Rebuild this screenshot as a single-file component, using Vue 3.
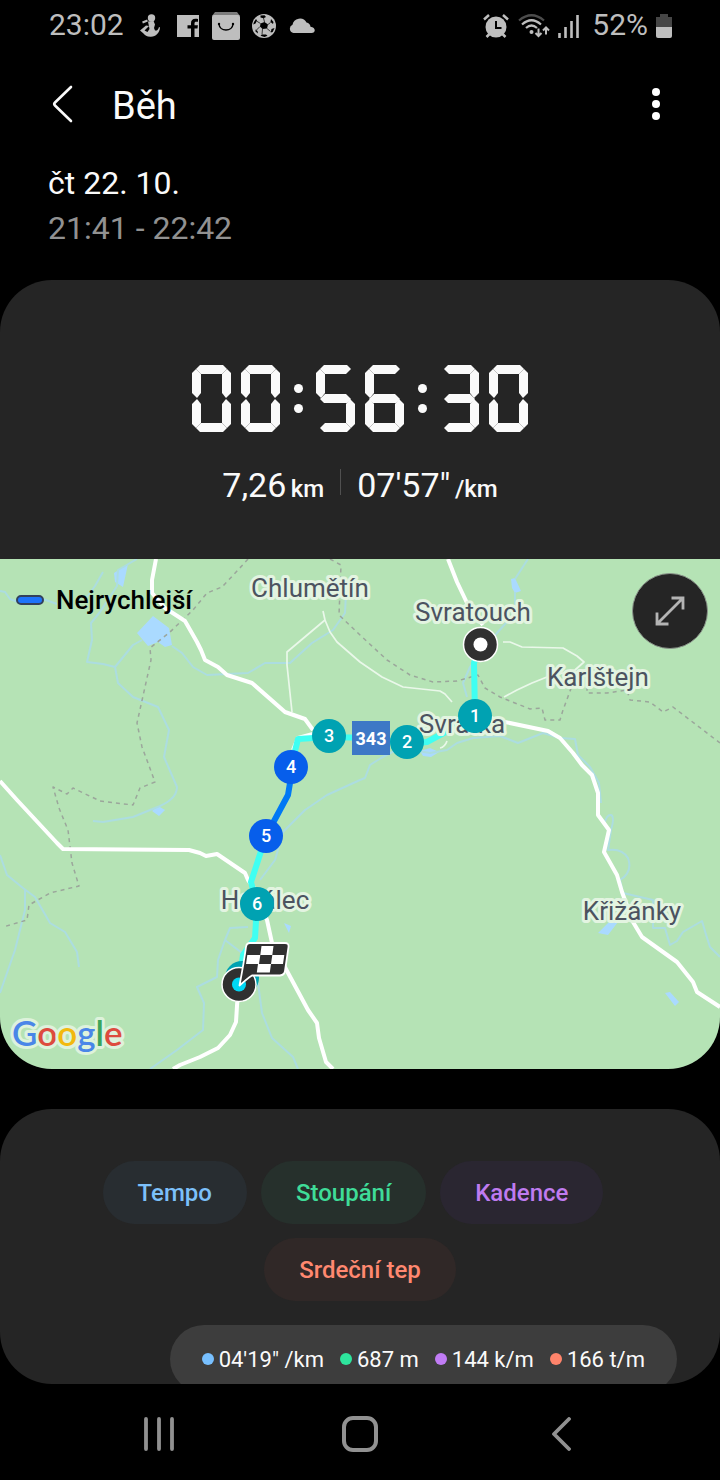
<script setup>
const segmentsByDigit = {
  0: 'abcdef', 1: 'bc', 2: 'abged', 3: 'abgcd', 4: 'fgbc',
  5: 'afgcd', 6: 'afgedc', 7: 'abc', 8: 'abcdefg', 9: 'abcdfg'
}
const duration = '00:56:30'

const chipRows = [
  [
    { label: 'Tempo', tone: 'pace' },
    { label: 'Stoupání', tone: 'climb' },
    { label: 'Kadence', tone: 'cadence' }
  ],
  [{ label: 'Srdeční tep', tone: 'heart' }]
]

const readings = [
  { text: '04\'19" /km', tone: 'pace' },
  { text: '687 m', tone: 'climb' },
  { text: '144 k/m', tone: 'cadence' },
  { text: '166 t/m', tone: 'heart' }
]

const towns = [
  { name: 'Chlumětín', x: 310, y: 597 },
  { name: 'Svratouch', x: 473, y: 621 },
  { name: 'Karlštejn', x: 598, y: 686 },
  { name: 'Svratka', x: 462, y: 733 },
  { name: 'Herálec', x: 265, y: 909 },
  { name: 'Křižánky', x: 632, y: 920 }
]

const kilometres = [
  { n: 1, x: 475, y: 716 },
  { n: 2, x: 407, y: 742 },
  { n: 3, x: 329, y: 736 },
  { n: 4, x: 291, y: 767, fast: true },
  { n: 5, x: 266, y: 836, fast: true },
  { n: 6, x: 257, y: 904 }
]
</script>

<template>
  <div class="screen">
    <div class="status">
      <div class="status-side">
        <span class="clock">23:02</span>
        <svg class="i-fit" width="20" height="24" viewBox="0 0 20 24" aria-hidden="true">
          <circle cx="11.500" cy="4" r="3.700" />
          <path d="M8 7.500 13.500 7l1.500 3.500-1 3.500 1 2.500c2 .500 3-.500 4-3.500l1 .500c-.500 5.500-4 9-9 9.300-4 .200-6-1.300-7.500-3.300L0 16.500 6 11.500l3 .500-4.500 4.500 3 1.500 2-3z" />
          <path d="M2.500 8.500 7.500 6.500" stroke="currentColor" stroke-width="2" />
        </svg>
        <svg class="i-fb" width="22" height="22" viewBox="0 0 22 22" aria-hidden="true">
          <path fill-rule="evenodd" d="M0 0h22v22h-4.500v-8.500h3l.400-3.200h-3.400V8.500c0-1.200.500-1.700 1.700-1.700h1.800V4c-.700-.100-1.500-.200-2.600-.200-3 0-4.400 1.700-4.400 4.400v2.100H10.500v3.200H14V22H0z" />
        </svg>
        <svg class="i-bag" width="28" height="28" viewBox="0 0 28 28" aria-hidden="true">
          <path d="M3 0h22l3 4H0z" opacity=".65" />
          <rect y="3" width="28" height="25" rx="2" />
          <path d="M7 12c.500 8 13.500 8 14 0" fill="none" stroke="#000" stroke-width="1.500" />
          <circle cx="7" cy="12" r="1.200" fill="#000" /><circle cx="21" cy="12" r="1.200" fill="#000" />
        </svg>
        <svg class="i-ball" width="24" height="24" viewBox="0 0 24 24" aria-hidden="true">
          <circle cx="12" cy="12" r="12" />
          <g fill="#000">
            <path d="M8.500 9.500 12.500 8l3.500 2.500-1 4-4.500.500-2.500-2.500z" />
            <path d="M8.500 1.500 12.500 1.200 14 3l-2.500 1.200L8.500 3.500zM19 5l2.500 3-.5 2-2.500-2zM22.500 14l-1.800 4-2 .5.800-3.500zM14 20.500l1.500 1.200-3 1.300-4-1.200 1.500-1.300zM3.500 15.500l2 1.500.500 2.500-2.500-2zM2 8l2-3L5 6.500 3.500 9.500 1.200 10.500z" />
          </g>
          <path d="M11.500 4 12.500 8M16 10.500l2.500-2M15 14.500l3.500 3M10.500 15l-.5 5.500M8 12.500l-3.500 3.500M8.500 9.500 4.500 7" stroke="#000" stroke-width=".7" />
        </svg>
        <svg class="i-cloud" width="26" height="16" viewBox="0 0 26 16" aria-hidden="true">
          <path d="M4.500 15A4.300 4.300 0 0 1 3.500 6.800 7.500 7.500 0 0 1 17.500 4.500a5 5 0 0 1 4 4.200c5.500.500 5.500 6.300 1 6.300z" />
        </svg>
      </div>
      <div class="status-side">
        <svg width="26" height="24" viewBox="0 0 26 24" aria-hidden="true">
          <circle cx="13" cy="13" r="10.500" />
          <path d="M1 5.500 6 1M25 5.500 20 1M6.500 20 3.500 23M19.500 20l3 3" stroke="currentColor" stroke-width="2.500" />
          <path d="M13 7v7h5.500" fill="none" stroke="#000" stroke-width="2" />
        </svg>
        <svg class="i-wifi" width="32" height="24" viewBox="0 0 32 24" aria-hidden="true">
          <g fill="none" stroke="currentColor" stroke-width="2.200">
            <path d="M1 6.500Q13.500-4 26 6.500" opacity=".4" />
            <path d="M4 10.500q9.500-8.500 19 0" />
            <path d="M8 14q5.500-5 11 0" />
            <path d="M20.500 14.500v7.500M17.500 19l3 3 3-3M28 20.500V13.500M25 16.500l3-3 3 3" stroke-width="2" />
          </g>
          <circle cx="13.500" cy="18" r="2" />
        </svg>
        <svg class="i-signal" width="22" height="23" viewBox="0 0 22 23" aria-hidden="true">
          <path d="M1.500 18v5M7.500 12v11M13.500 6v17M19.500 0v23" stroke="currentColor" stroke-width="2.600" />
        </svg>
        <span class="percent">52%</span>
        <svg width="16" height="24" viewBox="0 0 16 24" aria-hidden="true">
          <path d="M4 0h8v3h4v10H0V3h4z" fill="#464646" /><path d="M0 13h16v9q0 2-2 2H2q-2 0-2-2z" />
        </svg>
      </div>
    </div>

    <header class="bar">
      <button class="icon-button back" aria-label="Zpět">
        <svg width="22" height="38" viewBox="0 0 22 38"><path d="M20 2 4 17.500q-1.500 1.500 0 3L20 36" fill="none" stroke="#fafafa" stroke-width="2.600" stroke-linecap="round" /></svg>
      </button>
      <h1>Běh</h1>
      <button class="icon-button more" aria-label="Další možnosti">
        <svg width="8" height="32" viewBox="0 0 8 32" fill="#fff"><circle cx="4" cy="4" r="4" /><circle cx="4" cy="16" r="4" /><circle cx="4" cy="28" r="4" /></svg>
      </button>
    </header>

    <main>
      <div class="when">
        <div>čt 22. 10.</div>
        <div class="hours">21:41 - 22:42</div>
      </div>

      <section class="card summary">
        <div class="timer" role="img" :aria-label="duration">
          <template v-for="(c, i) in duration" :key="i">
            <span v-if="c === ':'" class="colon"><i></i><i></i></span>
            <span v-else class="digit"><i v-for="s in segmentsByDigit[c]" :key="s" :class="['seg', s]"></i></span>
          </template>
        </div>
        <div class="totals">
          <span class="total">7,26 <small>km</small></span>
          <span class="rule"></span>
          <span class="total">07'57" <small>/km</small></span>
        </div>

        <div class="map">
          <svg class="terrain" viewBox="0 559 720 510">
            <g class="water">
              <path d="M137 633 153 616 169 628 172 645 165 647 158 642 148 646zM114 573 128 564 123 587 115 582zM152 811 158 806 165 810 159 816zM511 579 515 578 521 591 515 593 512 588zM598 933 612 919 618 922 608 935zM665 993 670 992 679 1002 675 1006zM284 923 291 926 289 933zM420 751 430 748 439 752 431 757 423 756z" />
            </g>
            <g class="river">
              <path d="M0 591 5 592 10 599 18 602M40 598 57 604" />
              <path d="M103 572 95 586 87 597M137 559 118 570 117 586 100 612 91 623 92 640 87 662 103 664 115 667 118 683 133 697 158 707 169 730 164 757 177 787Q177 800 155 808L133 817 103 822 93 821M115 667 133 645 142 640" />
              <path d="M172 646 182 653 193 667 207 675 248 673 265 663 290 663 312 643 333 630 345 613 346 593" />
              <path d="M528 559 515 579M515 592V613L497 633 470 667 463 683 467 697" />
              <path d="M601 803 599 783 590 767 578 755 575 739 560 738 543 733 518 743 500 736 473 738 457 743 447 750 430 753 400 748 381 758 370 765 365 778 360 780 327 795 305 810 283 832 275 860 260 880" />
              <path d="M604 824Q607 814 611 815 615 817 611 830L608 850Q622 848 628 858 633 872 620 880L623 893 653 900V928H665L670 945 677 941 683 932 702 921Q706 935 710 947L720 957" />
              <path d="M0 855 7 875 23 888 35 897 50 923 65 932 77 952 79 967M25 890V910L15 950 0 993" />
              <path d="M248 927 230 928 225 940 218 960 217 977 197 987 204 1003 203 1030 177 1050 150 1069M225 940 242 953M258 983 262 1013 272 1038 293 1057 298 1069" />
            </g>
            <g class="border">
              <path d="M248 559 238 570 222 587 207 593 193 610 170 632 150 648 151 660 137 723 142 747 148 763 155 782 140 788 133 805 100 801 73 788 67 794 53 787 59 808 68 830 72 863 79 886 50 893 29 905 27 920 3 927" />
              <path d="M330 559 341 565 339 615 360 635 387 660 410 675 433 682 457 681 478 675 485 688 500 697 530 709 542 708 545 720 560 720 563 710 573 683 587 686 587 693 607 693 627 690 630 700 650 702 663 712 673 707 720 743" />
            </g>
            <g class="lane">
              <path d="M323 611 325 620 287 652V665L292 712M325 620 330 632 337 642 360 662 382 677 403 687 440 691 445 694 452 702" />
              <path d="M503 642H510L522 647 563 648 577 656 584 662 575 670 547 677 532 683 517 690 504 697M447 741Q445 747 440 748" />
            </g>
            <g class="road">
              <path d="M156 559 152 580V593L165 608 185 621 197 642 201 650 205 660 218 667 227 675 252 683 285 712 305 719 313 730M313 734 298 738 293 750" />
              <path d="M0 781 17 800 57 843 63 849 189 850 200 853 206 856 217 854 245 873 248 880 254 888 267 920 272 943 287 971 308 1010 317 1023 319 1038 326 1062 333 1069" />
              <path d="M238 990 236 1022 230 1035 218 1048 200 1057 180 1065 173 1069M448 559 457 582 468 605 483 625" />
              <path d="M490 718 505 722 548 731 560 738 573 753 582 765 592 775 598 793V815L609 830 604 852 617 875 622 892 633 922 642 937 677 962 693 982 697 992 720 1007" />
            </g>
            <g class="route">
              <path d="M480 645 474 663 475 716 427 742 407 744 371 738 329 737 298 739 291 767M266 836 251 882 257 904 255 938 243 955 239 985" />
              <path class="fastest" d="M291 767 290 783 288 795 266 836" />
            </g>
            <g class="town">
              <text v-for="t in towns" :key="t.name" :x="t.x" :y="t.y">{{ t.name }}</text>
            </g>
            <rect x="352" y="721" width="38" height="34" fill="#3d78c6" />
            <text class="shield" x="371" y="745">343</text>
            <circle cx="242" cy="978" r="17" fill="#00a2b2" />
            <g v-for="k in kilometres" :key="k.n" class="km" :class="{ fast: k.fast }">
              <circle :cx="k.x" :cy="k.y" r="17" />
              <text :x="k.x" :y="k.y + 6">{{ k.n }}</text>
            </g>
            <circle cx="480.500" cy="644.500" r="17" fill="#303030" stroke="#fff" stroke-width="1.500" />
            <circle cx="480.500" cy="644.500" r="7" fill="#fff" />
            <circle cx="239" cy="984.500" r="17" fill="#303030" stroke="#fff" stroke-width="1.500" />
            <circle cx="239" cy="984.500" r="7" fill="#00d7f5" />
            <path d="M250 943H285Q289 943 288.500 947L285 971Q284.500 975 280 975.500H252Q248 978 239.500 985.500 244 962 246 947 246.500 943 250 943z" fill="#303030" stroke="#fff" stroke-width="1.800" />
            <path d="M261.500 946H273.500L272.300 955H284.300L283 964H271L269.800 972.500H256.800L258 964H246L247.300 955H260.300zM260.300 955 259 964H271L272.300 955z" fill="#fff" fill-rule="evenodd" />
            <text class="brand" x="12" y="1046"><tspan fill="#4a86e8">G</tspan><tspan fill="#dd4b3e">o</tspan><tspan fill="#f2b90f">o</tspan><tspan fill="#4a86e8">g</tspan><tspan fill="#3ba55c">l</tspan><tspan fill="#dd4b3e">e</tspan></text>
          </svg>
          <div class="legend"><span class="swatch"></span>Nejrychlejší</div>
          <button class="expand" aria-label="Zvětšit mapu">
            <svg width="32" height="32" viewBox="0 0 32 32" fill="none" stroke="#b4b4b4" stroke-width="2.800"><path d="M3 29 29 3M17.500 3H29v11.500M3 17.500V29h11.500" /></svg>
          </button>
        </div>
      </section>

      <section class="card chart">
        <div v-for="(row, i) in chipRows" :key="i" class="chips">
          <button v-for="chip in row" :key="chip.label" class="chip" :class="chip.tone">{{ chip.label }}</button>
        </div>
        <div class="readout">
          <span v-for="r in readings" :key="r.text" class="reading"><i class="dot" :class="r.tone"></i>{{ r.text }}</span>
        </div>
      </section>
    </main>

    <nav class="system">
      <button class="icon-button" aria-label="Poslední aplikace">
        <svg width="32" height="34" viewBox="0 0 32 34"><path d="M3 2v30M16 2v30M29 2v30" stroke="#919191" stroke-width="3.800" stroke-linecap="round" /></svg>
      </button>
      <button class="icon-button" aria-label="Domů">
        <svg width="36" height="36" viewBox="0 0 36 36"><rect x="2" y="2" width="32" height="32" rx="9" fill="none" stroke="#919191" stroke-width="4" /></svg>
      </button>
      <button class="icon-button" aria-label="Zpět v systému">
        <svg width="20" height="34" viewBox="0 0 20 34"><path d="M18 2 3 17 18 32" fill="none" stroke="#919191" stroke-width="3.800" stroke-linecap="round" stroke-linejoin="round" /></svg>
      </button>
    </nav>
  </div>
</template>

<style>
body { background: #000; }
</style>

<style scoped>
* { box-sizing: border-box; }
.screen {
  display: flex;
  flex-direction: column;
  height: 100vh;
  background: #000;
  color: #fafafa;
  font-family: Roboto, "Noto Sans", sans-serif;
}
button { border: 0; padding: 0; font: inherit; color: inherit; background: none; cursor: pointer; }
svg { display: block; flex: none; }

.status {
  flex: none;
  display: flex;
  justify-content: space-between;
  align-items: center;
  height: 52px;
  padding: 0 48px 0 49px;
  color: #bebebe;
  font-size: 30px;
  line-height: 32px;
}
.status svg { fill: currentColor; }
.status-side { display: flex; align-items: center; height: 50px; }
.clock, .percent { margin-bottom: 2px; }
.i-fit { margin-left: 16px; }
.i-fb { margin-left: 17px; }
.i-bag { margin-left: 13px; }
.i-ball { margin-left: 12px; }
.i-cloud { margin-left: 13px; }
.i-wifi { margin-left: 9px; }
.i-signal { margin-left: 8px; }
.percent { margin-left: 12px; margin-right: 8px; }

.bar { flex: none; display: flex; align-items: center; height: 108px; padding: 0 48px; }
.icon-button { display: flex; align-items: center; justify-content: center; }
.back { width: 28px; height: 44px; margin-bottom: 4px; }
.bar h1 { flex: 1; margin: 0 0 0 36px; font-size: 38px; font-weight: 400; line-height: 48px; }
.more { width: 32px; height: 44px; margin: 0 0 4px; }

main { flex: 1; min-height: 0; overflow: hidden; border-radius: 0 0 52px 52px; }
.when { height: 120px; padding: 1px 48px 0; font-size: 32px; line-height: 45px; }
.hours { color: #919191; }

.card { background: #252525; border-radius: 52px; overflow: hidden; }
.summary { padding-top: 85px; }
.timer { display: flex; justify-content: center; height: 67px; }
.digit { position: relative; width: 39px; }
.digit + .digit { margin-left: 10px; }
.seg { position: absolute; background: #fafafa; }
.a, .g, .d {
  left: 4px; width: 31px; height: 9px;
}
.a { top: 0; clip-path: polygon(4px 0, 27px 0, 31px 4px, 26px 9px, 5px 9px, 0 4px); }
.g { top: 29px; clip-path: polygon(5px 0, 26px 0, 31px 5px, 27px 9px, 4px 9px, 0 5px); }
.d { bottom: 0; clip-path: polygon(5px 0, 26px 0, 31px 5px, 27px 9px, 4px 9px, 0 5px); }
.b, .c, .e, .f { width: 9px; height: 29px; }
.b, .f { top: 4px; }
.c, .e { bottom: 4px; }
.e, .f { left: 0; }
.b, .c { right: 0; }
.f { clip-path: polygon(4px 0, 9px 5px, 9px 24px, 5px 29px, 0 24px, 0 4px); }
.b { clip-path: polygon(5px 0, 9px 4px, 9px 24px, 4px 29px, 0 24px, 0 5px); }
.e { clip-path: polygon(5px 0, 9px 5px, 9px 24px, 4px 29px, 0 25px, 0 5px); }
.c { clip-path: polygon(4px 0, 9px 5px, 9px 25px, 5px 29px, 0 24px, 0 5px); }
.colon { display: flex; flex-direction: column; align-items: center; gap: 11px; width: 36px; padding-top: 19px; }
.colon i { width: 9px; height: 9px; border-radius: 50%; background: #fafafa; }

.totals {
  display: flex;
  justify-content: center;
  align-items: center;
  gap: 16px;
  height: 40px;
  margin: 33px 0 54px;
  font-size: 34px;
  line-height: 40px;
}
.total { white-space: nowrap; }
.total small { margin-left: -4px; font-size: 24px; font-weight: 500; line-height: 24px; }
.rule { width: 1px; height: 26px; margin-bottom: 6px; background: #505050; }

.map { position: relative; background: #b5e3b5; }
.terrain { width: 100%; height: auto; stroke-linejoin: round; }
.water { fill: #aadaff; }
.river { fill: none; stroke: #acdde0; stroke-width: 2; }
.border { fill: none; stroke: #9ba69b; stroke-width: 1.5; stroke-dasharray: 4 4; }
.lane { fill: none; stroke: #eaf8ea; stroke-width: 1.7; }
.road { fill: none; stroke: #fff; stroke-width: 4; }
.route { fill: none; stroke: #3ffff2; stroke-width: 6; }
.fastest { stroke: #0078f5; }
.town { fill: #4c5360; font-size: 26px; text-anchor: middle; stroke: #e3f4e1; stroke-width: 6; paint-order: stroke; }
.shield { fill: #fff; font-size: 18px; font-weight: 700; text-anchor: middle; }
.km { fill: #00a2b2; }
.km.fast { fill: #075eeb; }
.km text { fill: #fff; font-size: 18px; font-weight: 500; text-anchor: middle; }
.brand { font-family: Lato, sans-serif; font-size: 35px; font-weight: 600; stroke: #def2dc; stroke-width: 6; paint-order: stroke; }
.legend {
  position: absolute;
  top: 24px;
  left: 16px;
  display: flex;
  align-items: center;
  gap: 12px;
  color: #000;
  font-size: 26px;
  font-weight: 500;
  line-height: 34px;
}
.swatch { width: 28px; height: 10px; border: 2px solid #33415c; border-radius: 5px; background: #1e74fa; }
.expand {
  position: absolute;
  top: 14px;
  right: 12px;
  display: flex;
  align-items: center;
  justify-content: center;
  width: 76px;
  height: 76px;
  border: 1px solid #8a948a;
  border-radius: 50%;
  background: #252525;
}

.chart { margin-top: 40px; padding: 52px 43px 24px; }
.chips { display: flex; justify-content: center; gap: 14px; margin-bottom: 14px; }
.chips:first-child { padding-right: 14px; }
.chip { height: 63px; padding: 0 35px; border-radius: 32px; font-size: 24px; font-weight: 500; white-space: nowrap; }
.chip.pace { color: #7cc0fa; background: #282d31; }
.chip.climb { color: #3fdc98; background: #26302c; }
.chip.cadence { color: #bf7bf0; background: #2a2631; }
.chip.heart { color: #ff8870; background: #302827; }
.readout {
  display: flex;
  align-items: center;
  gap: 16px;
  width: max-content;
  height: 68px;
  margin: 24px 0 0 auto;
  padding: 0 32px;
  border-radius: 34px;
  background: #3d3d3d;
  font-size: 22px;
}
.reading { display: flex; align-items: center; gap: 5px; white-space: nowrap; }
.dot { width: 12px; height: 12px; border-radius: 50%; }
.dot.pace { background: #78c0ff; }
.dot.climb { background: #2ee59d; }
.dot.cadence { background: #c17cf5; }
.dot.heart { background: #ff846b; }

.system {
  flex: none;
  display: grid;
  grid-template-columns: repeat(3, 1fr);
  height: 96px;
  padding: 4px 58px 0;
}
</style>
